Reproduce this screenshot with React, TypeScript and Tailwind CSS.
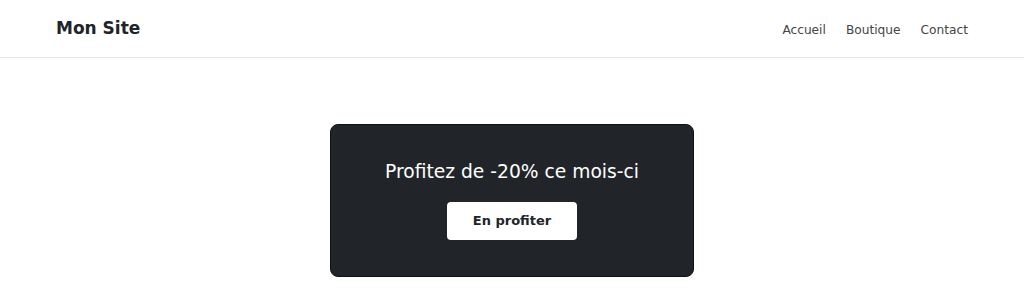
export default function App() {
  return (
    <div className="min-h-screen bg-white text-[#212529] font-['DejaVu_Sans',sans-serif]">
      {/* header */}
      <header className="h-[58px] border-b border-[#e6e6e6] flex items-center justify-between px-[56px]">
        <span className="text-[17px] font-bold">Mon Site</span>
        <nav className="flex items-center gap-[20px] text-[12.2px] text-[#444] pt-[4px]">
          <a href="#">Accueil</a>
          <a href="#">Boutique</a>
          <a href="#">Contact</a>
        </nav>
      </header>

      {/* promo */}
      <main className="flex justify-center pt-[66px]">
        <div className="w-[364px] h-[153px] rounded-[8px] bg-[#212529] border border-[#111] flex flex-col items-center pt-[35px]">
          <h2 className="text-[18.7px] leading-[24px] text-white">Profitez de -20% ce mois-ci</h2>
          <button className="mt-[18px] w-[130px] h-[38px] bg-white rounded-[4px] text-[13px] font-bold text-[#212529]">
            En profiter
          </button>
        </div>
      </main>
    </div>
  );
}
